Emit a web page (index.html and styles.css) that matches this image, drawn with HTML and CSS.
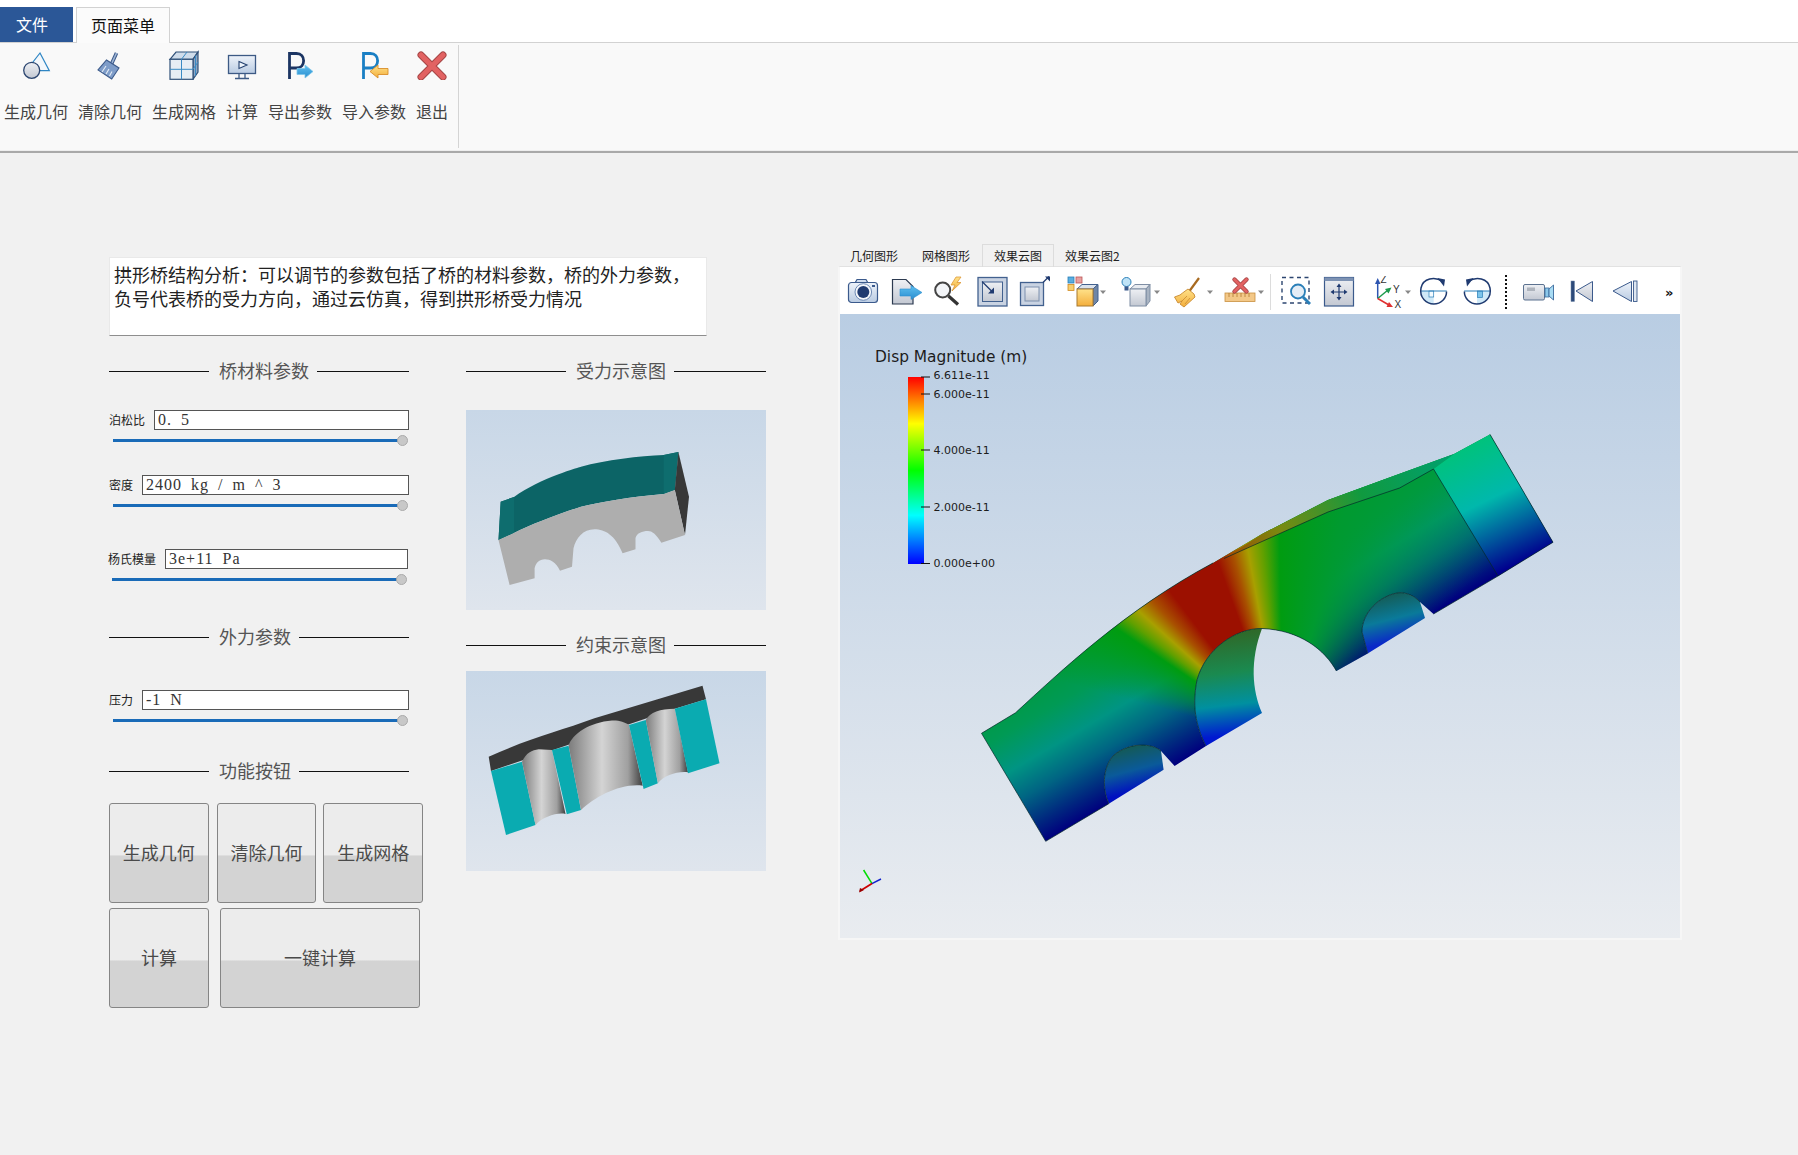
FILE: index.html
```html
<!DOCTYPE html>
<html lang="zh">
<head>
<meta charset="utf-8">
<title>拱形桥结构分析</title>
<link rel="stylesheet" href="styles.css">
</head>
<body>
<svg class="defs" width="0" height="0" aria-hidden="true">
  <defs>
    <linearGradient id="gBlue" x1="0" y1="0" x2="0" y2="1"><stop offset="0" stop-color="#eef3fa"/><stop offset="1" stop-color="#b9cbe2"/></linearGradient>
    <linearGradient id="gGrey" x1="0" y1="0" x2="0" y2="1"><stop offset="0" stop-color="#eef0f4"/><stop offset="1" stop-color="#c3c8d2"/></linearGradient>
    <linearGradient id="gSky" x1="0" y1="0" x2="0" y2="1"><stop offset="0" stop-color="#5fc0f0"/><stop offset="1" stop-color="#2a8ed0"/></linearGradient>
    <linearGradient id="gAmber" x1="0" y1="0" x2="0" y2="1"><stop offset="0" stop-color="#ffe28a"/><stop offset="1" stop-color="#f3ae3c"/></linearGradient>
    <linearGradient id="gCyl" x1="0" y1="0" x2="1" y2="0"><stop offset="0" stop-color="#7c7c7c"/><stop offset=".45" stop-color="#d4d4d4"/><stop offset=".8" stop-color="#a0a0a0"/><stop offset="1" stop-color="#3e3e3e"/></linearGradient>
    <linearGradient id="gFace" gradientUnits="userSpaceOnUse" x1="1045" y1="841" x2="969" y2="712"><stop offset="0" stop-color="#00007e"/><stop offset=".12" stop-color="#00257f"/><stop offset=".32" stop-color="#006483"/><stop offset=".52" stop-color="#009483"/><stop offset=".75" stop-color="#009a55"/><stop offset="1" stop-color="#009a3c"/></linearGradient>
    <linearGradient id="gEnd" gradientUnits="userSpaceOnUse" x1="1525" y1="560" x2="1470" y2="445"><stop offset="0" stop-color="#00008e"/><stop offset=".25" stop-color="#00569c"/><stop offset=".55" stop-color="#00b8ac"/><stop offset="1" stop-color="#00c27c"/></linearGradient>
    <linearGradient id="gTop" gradientUnits="userSpaceOnUse" x1="1224" y1="558" x2="1454" y2="454"><stop offset="0" stop-color="#a04a00"/><stop offset=".25" stop-color="#7a8a10"/><stop offset=".6" stop-color="#109a40"/><stop offset="1" stop-color="#00a070"/></linearGradient>
    <linearGradient id="gWallBig" gradientUnits="userSpaceOnUse" x1="1234" y1="735" x2="1222" y2="635"><stop offset="0" stop-color="#0018d0"/><stop offset=".3" stop-color="#0090a0"/><stop offset=".62" stop-color="#1a8a50"/><stop offset="1" stop-color="#2e6a2a"/></linearGradient>
    <linearGradient id="gWallSmallL" gradientUnits="userSpaceOnUse" x1="1140" y1="790" x2="1128" y2="745"><stop offset="0" stop-color="#000fc0"/><stop offset=".45" stop-color="#0a5a9a"/><stop offset="1" stop-color="#155a50"/></linearGradient>
    <linearGradient id="gWallSmallR" gradientUnits="userSpaceOnUse" x1="1398" y1="640" x2="1386" y2="593"><stop offset="0" stop-color="#0a28c8"/><stop offset=".45" stop-color="#0a7a9a"/><stop offset="1" stop-color="#155a50"/></linearGradient>
    <linearGradient id="gScale" x1="0" y1="0" x2="0" y2="1"><stop offset="0" stop-color="#f00"/><stop offset=".25" stop-color="#ff0"/><stop offset=".5" stop-color="#0f0"/><stop offset=".74" stop-color="#0ff"/><stop offset="1" stop-color="#00f"/></linearGradient>
    <clipPath id="faceClip"><path d="M981.5 733.3L1015.5 712.8C1060 672 1125 610 1213 563L1262 534L1328 500L1388 478L1454 454L1490 434.4L1553 542.3L1498 576L1433.5 614L1420 602C1412 593 1402 592 1397 593C1380 596 1362 612 1362 632L1367.7 653.4L1336.4 671C1325 650 1300 630 1262 628.5C1235 628 1205 650 1197 680C1191 710 1198 730 1206 746L1174.6 766L1161 751C1152 743 1130 742 1114 755C1104 765 1101 785 1108.8 803.7L1045.7 841.3Z"/></clipPath>
  </defs>
</svg>

<header class="tabbar">
  <div class="tab tab-file">文件</div>
  <div class="tab tab-page">页面菜单</div>
</header>

<nav class="ribbon">
  <div class="ribbon-group">
    <div class="rb">
      <svg class="rb-icon" viewBox="0 0 32 32"><path d="M20 5L29.3 22.7H18L13 14Z" fill="#f4f8fc" stroke="#2f86c4" stroke-width="1.2"/><circle cx="11.7" cy="22.3" r="8" fill="url(#gGrey)" stroke="#2c4670" stroke-width="1.3"/></svg>
      <span>生成几何</span>
    </div>
    <div class="rb">
      <svg class="rb-icon" viewBox="0 0 32 32"><path d="M22.5 5L17.5 16" stroke="#3c5a8a" stroke-width="3.6" fill="none"/><path d="M22.5 5L17.5 16" stroke="#9fb6d6" stroke-width="1.6" fill="none"/><path d="M12.5 12L25 20L17.7 31L4 22Z" fill="#7f9dc9" stroke="#3c5a8a" stroke-width="1.1"/><path d="M12 26L15 21M15.5 28L18 23.500M8 24L12 18" stroke="#e6edf6" stroke-width="1.1" fill="none"/></svg>
      <span>清除几何</span>
    </div>
    <div class="rb">
      <svg class="rb-icon" viewBox="0 0 32 32"><path d="M2 11.300L8 4H30L25 11.300Z" fill="#cfdcea" stroke="#2f5078" stroke-width="1.2"/><path d="M25 11.300L30 4V24L25 31.300Z" fill="#8fa6c2" stroke="#2f5078" stroke-width="1.2"/><rect x="2" y="11.300" width="23" height="20" fill="#e6edf4" stroke="#2f5078" stroke-width="1.2"/><path d="M13.500 11.300V31.300M2 21.300H25M19 4L13.500 11.300M27.500 7.700V27.700M25 21.300L30 14" stroke="#3a8ac4" stroke-width="1" fill="none"/></svg>
      <span>生成网格</span>
    </div>
    <div class="rb">
      <svg class="rb-icon" viewBox="0 0 32 32"><rect x="2.500" y="7.500" width="27" height="18" fill="url(#gBlue)" stroke="#3d5a85" stroke-width="1.300"/><path d="M13 13.500L21 17L13 20.500Z" fill="#eef4fb" stroke="#23406f" stroke-width="1.100"/><path d="M13 26V30M19 26V30M9 30.500H23" stroke="#3d5a85" stroke-width="1.300" fill="none"/></svg>
      <span>计算</span>
    </div>
    <div class="rb">
      <svg class="rb-icon" viewBox="0 0 32 32"><path d="M5.500 31V5.500H12.500C22 5.500 22 20 12.500 20H5.500" fill="none" stroke="#1c3563" stroke-width="2.800"/><path d="M13 20.500H21V17L29 23.500L21 30V26.500H13Z" fill="url(#gSky)" stroke="#7fc6ea" stroke-width=".8"/></svg>
      <span>导出参数</span>
    </div>
    <div class="rb">
      <svg class="rb-icon" viewBox="0 0 32 32"><path d="M5.500 31V5.500H12.500C22 5.500 22 20 12.500 20H5.500" fill="none" stroke="#1a7fc4" stroke-width="2.800"/><path d="M30 20.500H20V17L12 23.500L20 30V26.500H30Z" fill="url(#gAmber)" stroke="#d98f2a" stroke-width=".9"/></svg>
      <span>导入参数</span>
    </div>
    <div class="rb">
      <svg class="rb-icon" viewBox="0 0 32 32"><path d="M5 7L27 29M27 7L5 29" stroke="#a54545" stroke-width="7" stroke-linecap="round" fill="none"/><path d="M5 7L27 29M27 7L5 29" stroke="#e26262" stroke-width="5" stroke-linecap="round" fill="none"/></svg>
      <span>退出</span>
    </div>
  </div>
</nav>

<main class="main">
  <section class="left">
    <div class="desc">拱形桥结构分析：可以调节的参数包括了桥的材料参数，桥的外力参数，<br>负号代表桥的受力方向，通过云仿真，得到拱形桥受力情况</div>
    <div class="left-cols">
      <div class="params">
        <div class="heading"><i class="rule"></i><b>桥材料参数</b><i class="rule grow"></i></div>
        <div class="field field-poisson">
          <div class="field-row"><label>泊松比</label><input value="0. 5" readonly></div>
          <div class="slider"><span class="knob"></span></div>
        </div>
        <div class="field field-density">
          <div class="field-row"><label>密度</label><input value="2400 kg / m ^ 3" readonly></div>
          <div class="slider"><span class="knob"></span></div>
        </div>
        <div class="field field-young">
          <div class="field-row"><label>杨氏模量</label><input value="3e+11 Pa" readonly></div>
          <div class="slider"><span class="knob"></span></div>
        </div>
        <div class="heading heading-force"><i class="rule"></i><b>外力参数</b><i class="rule grow"></i></div>
        <div class="field field-pressure">
          <div class="field-row"><label>压力</label><input value="-1 N" readonly></div>
          <div class="slider"><span class="knob"></span></div>
        </div>
        <div class="heading heading-func"><i class="rule"></i><b>功能按钮</b><i class="rule grow"></i></div>
        <div class="btn-row btn-row-1">
          <button class="btn">生成几何</button>
          <button class="btn btn-b">清除几何</button>
          <button class="btn btn-c">生成网格</button>
        </div>
        <div class="btn-row btn-row-2">
          <button class="btn">计算</button>
          <button class="btn btn-wide">一键计算</button>
        </div>
      </div>
      <div class="figures">
        <div class="heading"><i class="rule"></i><b>受力示意图</b><i class="rule grow"></i></div>
        <svg class="figure figure-1" viewBox="466 410 300 200">
          <path d="M500.700 501.700L514 497C540 478 581 466.700 581 466.700C605 460 640 456 663.700 455L678.400 452L674.800 490L663.700 494C630 497 600 502 581 506.700C555 515 530 525 514 533L498.500 540Z" fill="#0c6466"/>
          <path d="M500.700 501.700L514 497L514 533L498.500 540Z" fill="#0e6d6e"/>
          <path d="M663.700 455L678.400 452L674.800 490L663.700 494Z" fill="#0e6d6e"/>
          <path d="M678.400 452L689 496.700L685 535L674.800 490Z" fill="#383838"/>
          <path d="M498.500 540L514 533C530 525 555 515 581 506.700C600 502 630 497 663.700 494L674.800 490L685 535L661.400 542.700C656 534 652 531 648 531C642 531 637 533 635.500 538L635.500 549.300L622.600 553.300C615 535 605 529.300 594.500 529.300C583 529.300 576 538 573.500 548.300L572 566.700L560 570.700C556 562 550 559.300 545 559.300C539 559.300 536 563 534.600 568.300L534.600 578.300L509.600 585Z" fill="#aeaeae"/>
        </svg>
        <div class="heading heading-fig2"><i class="rule"></i><b>约束示意图</b><i class="rule grow"></i></div>
        <svg class="figure figure-2" viewBox="466 671 300 200">
          <path d="M488.700 756.700C530 738 560 731 594.500 718.300L702.500 685.700L706 699.300L674.800 708.700L491 771Z" fill="#383838"/>
          <path d="M491 771L522 761.700L535.500 825L506 835Z" fill="#0aabb1"/>
          <path d="M522 761.700C526 753 532 750 538.700 749.300L552 750L565.500 814C558 812 542 817 535.500 825Z" fill="url(#gCyl)"/>
          <path d="M552 750L568.600 745.700L581 810L566.800 814.300Z" fill="#0aabb1"/>
          <path d="M568.600 745.700C572 734 590 722 612 720.500C618 720 625 722 629 725L642.700 785.700C620 783 595 797 581 810Z" fill="url(#gCyl)"/>
          <path d="M629 725L645.800 720L657.900 783.300L643.600 789Z" fill="#0aabb1"/>
          <path d="M645.800 720C650 712 660 709 674.800 708.700L688 772.300C678 771 664 775 657.900 783.300Z" fill="url(#gCyl)"/>
          <path d="M674.800 708.700L706 699.300L719.500 763.300L688 773.300Z" fill="#0aabb1"/>
        </svg>
      </div>
    </div>
  </section>

  <section class="view">
    <div class="view-tabs">
      <div class="view-tab">几何图形</div>
      <div class="view-tab">网格图形</div>
      <div class="view-tab view-tab-on">效果云图</div>
      <div class="view-tab view-tab-last">效果云图2</div>
    </div>
    <div class="view-panel">
      <div class="toolbar">
        <svg class="ti" viewBox="0 0 32 32"><path d="M8 7L10 3.500H19L21 7" fill="#cfdcee" stroke="#3b5a8c" stroke-width="1.200"/><rect x="1.500" y="6.500" width="29" height="20" rx="3" fill="url(#gBlue)" stroke="#3b5a8c" stroke-width="1.200"/><circle cx="16.300" cy="16" r="8.300" fill="#f4f7fb" stroke="#6f8bb5"/><circle cx="16.300" cy="16" r="6" fill="#1f3a70"/><rect x="25" y="9" width="3" height="2" fill="#3b5a8c"/></svg>
        <svg class="ti ml-11" viewBox="0 0 32 32"><path d="M2.500 3.500H16L23 10.500V28H2.500Z" fill="url(#gGrey)" stroke="#2c3a50" stroke-width="1.200"/><path d="M10 13H21V9.500L32 16.500L21 23.500V20H10Z" fill="url(#gSky)" stroke="#2a8ed0" stroke-width=".6"/></svg>
        <svg class="ti ml-8" viewBox="0 0 32 32"><circle cx="12.700" cy="14" r="7.500" fill="#f3f5f8" stroke="#444" stroke-width="2"/><path d="M18.500 20L28 28.500" stroke="#333" stroke-width="3.200"/><path d="M26 1L21 9H25L22 15L31 6.500H27L31 1Z" fill="url(#gAmber)" stroke="#d98f2a" stroke-width=".7"/></svg>
        <svg class="ti ml-14" viewBox="0 0 32 32"><rect x="2" y="1.500" width="29" height="28.500" fill="#c9d3e2" stroke="#42618f" stroke-width="1.300"/><rect x="6.500" y="6" width="20" height="19.500" fill="url(#gGrey)" stroke="#42618f"/><path d="M6 5.500L16 15.500" stroke="#1f3a70" stroke-width="1.300"/><path d="M18 11.500V17.500H12Z" fill="#1f3a70"/></svg>
        <svg class="ti ml-11" viewBox="0 0 32 32"><rect x="1.500" y="6.500" width="23" height="23" fill="#c9d3e2" stroke="#42618f" stroke-width="1.300"/><rect x="6" y="11" width="14" height="14" fill="url(#gGrey)" stroke="#7c90ad"/><path d="M24 6.500L30 .5" stroke="#1f3a70" stroke-width="1.300"/><path d="M26 .5H31V5.500Z" fill="#1f3a70"/></svg>
        <svg class="ti-w ml-15" viewBox="0 0 48 32"><rect x="2" y="1" width="6" height="6" fill="#5aaee0" stroke="#2a7fb8" stroke-width=".8"/><rect x="10" y="1" width="6" height="6" fill="#e8a0a0" stroke="#b55" stroke-width=".8"/><rect x="2" y="8.500" width="6" height="6" fill="#f7cf70" stroke="#d08a20" stroke-width=".8"/><path d="M11 13L16 8.500H32L27 13Z" fill="#dbe2ec" stroke="#42618f"/><path d="M27 13L32 8.500V25L27 30Z" fill="#6f86a6" stroke="#42618f"/><rect x="11" y="13" width="16" height="17" fill="url(#gAmber)" stroke="#a87a30"/><path d="M34 14.500H40L37 18Z" fill="#888"/></svg>
        <svg class="ti-w ml-7 ti-bulb" viewBox="0 0 48 32"><circle cx="5.500" cy="6" r="4.500" fill="#bfe3f7" stroke="#2a7fb8"/><rect x="3.500" y="10.500" width="4" height="4" fill="#3b5a8c"/><path d="M9 13L14 8.500H29L25 13Z" fill="#e8ebf0" stroke="#7f8ea4"/><path d="M25 13L29 8.500V25L25 30Z" fill="#a8b3c2" stroke="#7f8ea4"/><rect x="9" y="13" width="16" height="17" fill="url(#gGrey)" stroke="#7f8ea4"/><path d="M33 14.500H39L36 18Z" fill="#888"/></svg>
        <svg class="ti-w ml-4" viewBox="0 0 48 32"><path d="M25 2L15.500 15" stroke="#a86a20" stroke-width="2.200"/><path d="M14 13L20 18L21 21L10 31L6 28L8 25L4 27L.5 21L6 19L8.500 17Z" fill="url(#gAmber)" stroke="#c98a30" stroke-width=".9"/><path d="M13 20L7 26M16 22L11 28" stroke="#c98a30" stroke-width=".8"/><path d="M33 14.500H39L36 18Z" fill="#888"/></svg>
        <svg class="ti-r ml-1" viewBox="0 0 46 32"><rect x="2" y="17" width="30" height="8.500" fill="#f3c888" stroke="#c99040" stroke-width=".8"/><path d="M6 17V21M10 17V21M14 17V21M18 17V21M22 17V21M26 17V21" stroke="#b07a30" stroke-width=".8"/><path d="M11.500 3.500L23.500 15.500M23.500 3.500L11.500 15.500" stroke="#a54545" stroke-width="4.400" stroke-linecap="round"/><path d="M11.500 3.500L23.500 15.500M23.500 3.500L11.500 15.500" stroke="#e26262" stroke-width="2.800" stroke-linecap="round"/><path d="M35 14.500H41L38 18Z" fill="#888"/></svg>
        <span class="tsep"></span>
        <svg class="ti ml-8" viewBox="0 0 32 32"><rect x="3" y="1.500" width="27" height="25.500" fill="none" stroke="#2c4670" stroke-width="1.400" stroke-dasharray="4 3.500"/><circle cx="19" cy="15.500" r="7" fill="#e4edf6" stroke="#2a7fb8" stroke-width="1.800"/><path d="M24 21L31 28" stroke="#2a7fb8" stroke-width="3"/></svg>
        <svg class="ti ml-12" viewBox="0 0 32 32"><rect x="1.500" y="1.500" width="29" height="28.500" fill="url(#gGrey)" stroke="#3b5a8c" stroke-width="1.200"/><rect x="1.500" y="1.500" width="29" height="3.500" fill="#7d92b3"/><path d="M16 9V23M9 16H23" stroke="#1f3a70" stroke-width="1.200"/><path d="M16 7.500L18.500 11H13.500ZM16 24.500L18.500 21H13.500ZM7.500 16L11 13.500V18.500ZM24.500 16L21 13.500V18.500Z" fill="#1f3a70"/></svg>
        <svg class="ti-a ml-17" viewBox="0 0 44 32"><path d="M5.700 22.500V6" stroke="#2d55b0" stroke-width="1.500"/><path d="M5.700 2L8.500 8H3Z" fill="#2d55b0"/><path d="M5.700 22.500L16 14" stroke="#1d9a4c" stroke-width="1.500"/><path d="M19.500 11.500L16.500 17.500L13 13Z" fill="#1d9a4c"/><path d="M5.700 22.500L17 29" stroke="#e03030" stroke-width="1.500"/><path d="M21 31L14.500 31L17 26Z" fill="#e03030"/><text class="axis-t" x="8.500" y="7">Z</text><text class="axis-t" x="21" y="16.500">Y</text><text class="axis-t" x="22.500" y="31.500">X</text><path d="M33 14.500H39L36 18Z" fill="#888"/></svg>
        <svg class="ti ml-2" viewBox="0 0 32 32"><path d="M2.800 15H15.700V28C8.500 28 2.800 22 2.800 15Z" fill="#cfe9f8"/><rect x="11" y="15" width="4.700" height="6" fill="#f4fbff" stroke="#2a7fb8" stroke-width=".7"/><path d="M2.800 15H28.800" stroke="#2a7fb8" stroke-width="1"/><path d="M24.500 5.500C17 .2 5 2 3 12C1 22 9 28 15.700 28C23 28 28.800 22 28.500 15.500" fill="none" stroke="#1f3a70" stroke-width="1.500"/><path d="M19.500 2L27 3.500L26 10.500Z" fill="#1f3a70"/></svg>
        <svg class="ti ml-11" viewBox="0 0 32 32"><path d="M16 15H29.100C29.100 22 23 28 16 28Z" fill="#cfe9f8"/><rect x="16.500" y="15" width="5" height="6.500" fill="#7cc4ea" stroke="#2a7fb8" stroke-width=".7"/><path d="M3.100 15H29.100" stroke="#2a7fb8" stroke-width="1"/><path d="M7.500 5.500C15 .2 27 2 29 12C31 22 23 28 16 28C9 28 3.100 22 3.400 15.500" fill="none" stroke="#1f3a70" stroke-width="1.500"/><path d="M12.500 2L5 3.500L6 10.500Z" fill="#1f3a70"/></svg>
        <span class="tdots"></span>
        <svg class="ti ml-15" viewBox="0 0 32 32"><rect x="1.500" y="8.500" width="21" height="15.500" rx="1.500" fill="url(#gGrey)" stroke="#5c7290"/><rect x="5" y="11.500" width="8" height="3.500" fill="#aeb4bd"/><rect x="23" y="12" width="4" height="9" fill="#8cc8ea" stroke="#3b6a9c" stroke-width=".8"/><path d="M27 13L31.500 9V24L27 20Z" fill="#a8dcf4" stroke="#3b6a9c" stroke-width=".9"/></svg>
        <svg class="ti ml-12" viewBox="0 0 32 32"><rect x="5" y="5" width="3.500" height="20.500" fill="#2d4a7a" stroke="#6f86a6" stroke-width=".5"/><path d="M10 15L26.500 5.500V25.500Z" fill="url(#gGrey)" stroke="#3b5a8c"/></svg>
        <svg class="ti ml-10" viewBox="0 0 32 32"><path d="M5 15L23.500 5.500V25.500Z" fill="url(#gBlue)" stroke="#3b5a8c"/><rect x="25.500" y="5" width="3.500" height="20.500" fill="#dfe7f1" stroke="#3b5a8c" stroke-width=".9"/></svg>
        <span class="tmore">»</span>
      </div>
      <div class="viewport">
        <svg class="scene" viewBox="840 314 840 624">
          <g clip-path="url(#faceClip)">
            <rect x="960" y="420" width="600" height="430" fill="url(#gFace)"/>
            <foreignObject x="960" y="420" width="600" height="430"><div class="hot"></div></foreignObject>
          </g>
          <path d="M1224 558.500L1262 534L1328 500L1388 478L1454 454L1433.500 469L1399.600 488L1328 512Z" fill="url(#gTop)"/>
          <path d="M1433.500 469L1454 454L1490 434.400L1553 542.300L1498 576Z" fill="url(#gEnd)"/>
          <path d="M1262 628.500C1235 628 1205 650 1197 680C1191 710 1198 730 1206 746L1262 713C1252 690 1250 660 1262 628.500Z" fill="url(#gWallBig)"/>
          <path d="M1161 751C1152 743 1130 742 1114 755C1104 765 1101 785 1108.800 803.700L1163.600 769.700Z" fill="url(#gWallSmallL)"/>
          <path d="M1420 602C1412 593 1402 592 1397 593C1380 596 1362 612 1362 632L1367.700 653.400L1425 618Z" fill="url(#gWallSmallR)"/>
          <g class="wire">
            <path d="M1224 558.500L1328 512L1399.600 488L1433.500 469L1498 576"/>
            <path d="M1213 563C1125 610 1060 672 1015.500 712.800L981.500 733.300L1045.700 841.300L1108.800 803.700"/>
            <path d="M1490 434.400L1553 542.300L1498 576L1433.500 614"/>
            <path d="M1336.400 671C1325 650 1300 630 1262 628.500C1235 628 1205 650 1197 680C1191 710 1198 730 1206 746"/>
            <path d="M1420 602C1412 593 1402 592 1397 593C1380 596 1362 612 1362 632L1367.700 653.400"/>
            <path d="M1161 751C1152 743 1130 742 1114 755C1104 765 1101 785 1108.800 803.700"/>
          </g>
          <rect x="908" y="377" width="16" height="187" fill="url(#gScale)"/>
          <path class="tick" d="M921 377H930M921 394H930M921 450H930M921 507H930M921 563.500H930"/>
          <text class="legend-title" x="875" y="362">Disp Magnitude (m)</text>
          <text class="legend-label" x="933.500" y="379">6.611e-11</text>
          <text class="legend-label" x="933.500" y="398">6.000e-11</text>
          <text class="legend-label" x="933.500" y="454">4.000e-11</text>
          <text class="legend-label" x="933.500" y="511">2.000e-11</text>
          <text class="legend-label" x="933.500" y="566.500">0.000e+00</text>
          <path d="M872 883.600L863.600 870" stroke="#0d0" stroke-width="1.500"/>
          <path d="M872 883.600L881 879" stroke="#12c" stroke-width="1.500"/>
          <path d="M872 883.600L860 891" stroke="#c00" stroke-width="1.800"/>
          <path d="M859 892.500L860 888L864 890Z" fill="#900"/>
        </svg>
      </div>
    </div>
  </section>
</main>
</body>
</html>
```

FILE: styles.css
```css
* { box-sizing: border-box; }
html, body { margin: 0; height: 100%; overflow: hidden; }
body {
  width: 1798px;
  height: 1155px;
  background: #f1f1f1;
  font-family: "Noto Sans CJK SC", "Noto Sans", sans-serif;
  color: #333;
}
.defs { position: absolute; }

/* top tabs */
.tabbar {
  height: 43px;
  display: flex;
  align-items: flex-end;
  padding-top: 7px;
  background: #fff;
  border-bottom: 1px solid #d2d2d2;
}
.tab {
  height: 36px;
  font-size: 16px;
  line-height: 34px;
  text-align: center;
}
.tab-file { width: 73px; padding-right: 9px; background: #2b5797; color: #fff; height: 35px; }
.tab-page {
  width: 94px;
  margin-left: 3px;
  margin-bottom: -1px;
  background: #fbfbfb;
  color: #111;
  border: 1px solid #d2d2d2;
  border-bottom: none;
}

/* ribbon */
.ribbon {
  height: 110px;
  background: #f9f9f9;
  border-bottom: 2px solid #a9a9a9;
  box-shadow: inset 0 -1px 0 #eee;
  padding-top: 2px;
}
.ribbon-group {
  width: 459px;
  height: 103px;
  padding: 3px 10px 0 4px;
  display: flex;
  gap: 10px;
  border-right: 1px solid #d4d4d4;
}
.rb {
  display: flex;
  flex-direction: column;
  align-items: center;
  font-size: 16px;
  line-height: 20px;
  color: #444;
}
.rb-icon { width: 32px; height: 32px; margin-bottom: 21px; }
.rb span { white-space: nowrap; }

/* main */
.main { display: flex; align-items: flex-start; padding-left: 109px; }
.left { width: 729px; padding-top: 104px; }
.desc {
  width: 598px;
  height: 79px;
  padding: 4px 0 0 4px;
  background: #fff;
  border-top: 1px solid #e9e9e9;
  border-left: 1px solid #e9e9e9;
  border-right: 1px solid #e9e9e9;
  border-bottom: 1px solid #8e8e8e;
  font-size: 18px;
  line-height: 24px;
  color: #222;
  white-space: nowrap;
}
.left-cols { display: flex; margin-top: 23px; }
.params { width: 357px; }
.figures { width: 300px; }

.heading { display: flex; align-items: center; width: 300px; height: 24px; gap: 10px; }
.heading .rule { display: block; width: 100px; height: 1px; background: #111; }
.heading .rule.grow { flex: 1; width: auto; }
.heading b {
  font-weight: 400;
  font-size: 18px;
  line-height: 24px;
  color: #555;
  white-space: nowrap;
  margin: -2px -2px 0 0;
}
.heading-force { margin-top: 44px; }
.heading-func { margin-top: 37px; }
.heading-fig2 { margin-top: 23px; }

.field { width: 300px; }
.field-poisson { margin-top: 27px; }
.field-density { margin-top: 33px; }
.field-young { margin-top: 42px; margin-left: -1px; width: 299.500px; }
.field-pressure { margin-top: 41px; }
.field-row { display: flex; align-items: center; height: 20px; }
.field-row label { font-size: 12px; color: #222; white-space: nowrap; margin: -2px 9px 0 0; }
.field-row input {
  flex: 1;
  min-width: 0;
  height: 20px;
  padding: 0 3px;
  border: 1px solid #555;
  border-radius: 0;
  outline: none;
  background: #fff;
  color: #333;
  font-family: "Liberation Serif", serif;
  font-size: 16px;
  letter-spacing: 1px;
  word-spacing: 4px;
}
.slider {
  position: relative;
  height: 3px;
  margin: 9px 0 0 4px;
  background: #1a6bb8;
  width: 292px;
}
.knob {
  position: absolute;
  right: -3px;
  top: -4px;
  width: 11px;
  height: 11px;
  border-radius: 50%;
  background: #c8c8c8;
  border: 1px solid #aaa;
}

.btn-row { display: flex; width: 314px; }
.btn-row-1 { margin-top: 20px; }
.btn-row-2 { margin-top: 5px; }
.btn {
  width: 100px;
  height: 100px;
  padding: 0 0 3px;
  border: 1px solid #858585;
  border-radius: 3px;
  background: linear-gradient(#ececec 0, #ececec 52%, #d3d3d3 53%, #d3d3d3 100%);
  font-family: inherit;
  font-size: 18px;
  color: #4a4a4a;
}
.btn-b { margin-left: 8px; }
.btn-c { margin-left: 7px; }
.btn-wide { width: 200px; margin-left: 11px; }

.figure {
  display: block;
  width: 300px;
  height: 200px;
  background: linear-gradient(#c8d7e7, #dfe5ed);
}
.figure-1 { margin-top: 27px; }
.figure-2 { margin-top: 14px; }

/* viewer */
.view { width: 844px; padding-top: 91px; }
.view-tabs { display: flex; height: 22px; }
.view-tab {
  width: 72px;
  height: 23px;
  font-size: 12px;
  line-height: 23px;
  text-align: center;
  color: #222;
  white-space: nowrap;
}
.view-tab-last { width: 76px; padding-left: 11px; text-align: left; }
.view-tab-on { border: 1px solid #dcdcdc; border-bottom: none; line-height: 22px; position: relative; z-index: 1; }
.view-panel {
  border: 2px solid #f6f6f6;
  border-top: 1px solid #e2e2e2;
}
.toolbar {
  height: 47px;
  background: #fff;
  display: flex;
  align-items: center;
  padding-left: 7px;
  padding-top: 3px;
}
.ti { width: 32px; height: 32px; flex: none; }
.ti-w { width: 48px; height: 32px; flex: none; }
.ti-r { width: 46px; height: 32px; flex: none; }
.ti-a { width: 44px; height: 32px; flex: none; }
.ti-bulb { margin-left: 6px; margin-right: 1px; }
.ml-1 { margin-left: 1px; }
.ml-2 { margin-left: 2px; }
.ml-4 { margin-left: 4px; }
.ml-7 { margin-left: 7px; }
.ml-8 { margin-left: 8px; }
.ml-10 { margin-left: 10px; }
.ml-11 { margin-left: 11px; }
.ml-12 { margin-left: 12px; }
.ml-14 { margin-left: 14px; }
.ml-15 { margin-left: 15px; }
.ml-17 { margin-left: 17px; }
.tsep { width: 1px; height: 36px; margin-left: 1px; background: #dcdcdc; flex: none; }
.tdots { width: 2px; height: 34px; margin-left: 12px; border-left: 2px dotted #111; flex: none; }
.tmore { margin-left: 25px; font-family: "DejaVu Sans", sans-serif; font-size: 13px; font-weight: 700; color: #111; }
.axis-t { font-family: "Liberation Sans", sans-serif; font-size: 10px; fill: #333; }
.viewport {
  height: 624px;
  background: linear-gradient(#b9cde3, #e9ecf0);
}
.scene { display: block; width: 840px; height: 624px; }
.hot {
  width: 600px;
  height: 430px;
  background: conic-gradient(from 285deg at 323px 321px,
    rgba(0, 154, 64, 0) 0deg,
    #009c10 19deg,
    #60a000 23deg,
    #a8a000 27deg,
    #a85000 32deg,
    #9c1000 38deg,
    #9c1000 55deg,
    #a85000 60deg,
    #a8a000 64.6deg,
    #60a000 69deg,
    #009c10 74deg,
    #009a30 90deg,
    rgba(0, 154, 64, 0) 125deg,
    rgba(0, 154, 64, 0) 360deg);
}
.wire path { fill: none; stroke: #04282a; stroke-width: .7; }
.tick { stroke: #111; stroke-width: 1; fill: none; }
.legend-title { font-family: "DejaVu Sans", sans-serif; font-size: 15.400px; fill: #1c1c1c; }
.legend-label { font-family: "DejaVu Sans", sans-serif; font-size: 11px; fill: #1c1c1c; }
```
